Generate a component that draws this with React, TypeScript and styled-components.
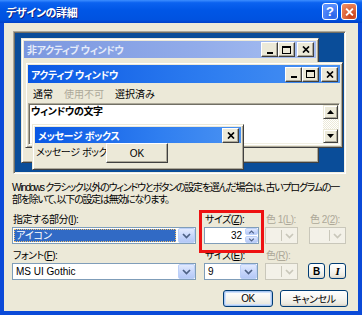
import React from "react";
import styled, { createGlobalStyle, css } from "styled-components";

const GlobalStyle = createGlobalStyle`
  html, body { margin: 0; padding: 0; background: #fff; }
  body {
    font-family: "Liberation Sans", "Noto Sans CJK JP", sans-serif;
    font-size: 10px;
    color: #000;
  }
`;

const Chevron = ({ color = "#4d6185", up = false }: { color?: string; up?: boolean }) => (
  <svg width="9" height="6" viewBox="0 0 9 6">
    <path
      d={up ? "M1 5 L4.5 1.5 L8 5" : "M1 1 L4.5 4.5 L8 1"}
      fill="none"
      stroke={color}
      strokeWidth="1.7"
    />
  </svg>
);

const Cross = ({ color = "#000", size = 8 }: { color?: string; size?: number }) => (
  <svg width={size} height={size - 1} viewBox="0 0 8 7">
    <path d="M1 0.5 L7 6.5 M7 0.5 L1 6.5" stroke={color} strokeWidth="1.7" />
  </svg>
);

const Triangle = ({ up = false }: { up?: boolean }) => (
  <svg width="7" height="4" viewBox="0 0 7 4">
    <path d={up ? "M0 4 L3.5 0 L7 4 Z" : "M0 0 L3.5 4 L7 0 Z"} fill="#000" />
  </svg>
);

export default function App() {
  return (
    <>
      <GlobalStyle />
      <Dialog>
        <TitleBar>
          <TitleText>デザインの詳細</TitleText>
          <CaptionButton $variant="help">?</CaptionButton>
          <CaptionButton $variant="close">
            <Cross color="#fff" size={9} />
          </CaptionButton>
        </TitleBar>

        <Body>
          <Preview>
            <Win $x={7} $y={6} $w={298} $h={125}>
              <Caption $h={17}>
                <CaptionTitle>非アクティブ ウィンドウ</CaptionTitle>
                <WinButton>
                  <MinGlyph />
                </WinButton>
                <WinButton>
                  <MaxGlyph />
                </WinButton>
                <WinButton $gap>
                  <Cross />
                </WinButton>
              </Caption>
            </Win>

            <Win $x={11} $y={30} $w={318} $h={86}>
              <Caption $active $h={18}>
                <CaptionTitle $active>アクティブ ウィンドウ</CaptionTitle>
                <WinButton>
                  <MinGlyph />
                </WinButton>
                <WinButton>
                  <MaxGlyph />
                </WinButton>
                <WinButton $gap>
                  <Cross />
                </WinButton>
              </Caption>
              <MenuBar>
                <MenuItem>通常</MenuItem>
                <MenuItem $disabled>使用不可</MenuItem>
                <MenuItem>選択済み</MenuItem>
              </MenuBar>
              <Client>
                <ClientText>ウィンドウの文字</ClientText>
                <ScrollBar>
                  <ScrollButton>
                    <Triangle up />
                  </ScrollButton>
                  <ScrollTrack />
                  <ScrollButton>
                    <Triangle />
                  </ScrollButton>
                </ScrollBar>
              </Client>
            </Win>

            <Win $x={18} $y={92} $w={212} $h={46}>
              <Caption $active $h={16}>
                <CaptionTitle $active>メッセージ ボックス</CaptionTitle>
                <WinButton>
                  <Cross />
                </WinButton>
              </Caption>
              <MsgBody>
                <MsgText>メッセージ ボックスの</MsgText>
                <MsgOk>OK</MsgOk>
              </MsgBody>
            </Win>
          </Preview>

          <Description>
            <DescLine>
              Windows クラシック以外のウィンドウとボタンの設定を選んだ場合は、古いプログラムの一
            </DescLine>
            <DescLine>部を除いて、以下の設定は無効になります。</DescLine>
          </Description>

          <Controls>
            <Label>
              指定する部分(<u>I</u>):
            </Label>
            <Label>
              サイズ(<u>Z</u>):
            </Label>
            <Label $disabled>
              色 1(<u>L</u>):
            </Label>
            <Label $disabled>
              色 2(<u>2</u>):
            </Label>

            <Combo $w={184}>
              <ComboText $selected>アイコン</ComboText>
              <ComboArrow>
                <Chevron />
              </ComboArrow>
            </Combo>
            <Combo $w={55}>
              <SpinText>32</SpinText>
              <SpinButtons>
                <SpinHalf>
                  <Chevron up />
                </SpinHalf>
                <SpinHalf>
                  <Chevron />
                </SpinHalf>
              </SpinButtons>
            </Combo>
            <Combo $w={33} $disabled>
              <ComboText />
              <ComboArrow $disabled>
                <Chevron color="#c9c7ba" />
              </ComboArrow>
            </Combo>
            <Combo $w={37} $disabled>
              <ComboText />
              <ComboArrow $disabled>
                <Chevron color="#c9c7ba" />
              </ComboArrow>
            </Combo>

            <Label>
              フォント(<u>F</u>):
            </Label>
            <Label>
              サイズ(<u>E</u>):
            </Label>
            <Label $disabled>
              色(<u>R</u>):
            </Label>
            <span />

            <Combo $w={184}>
              <ComboText>MS UI Gothic</ComboText>
              <ComboArrow>
                <Chevron />
              </ComboArrow>
            </Combo>
            <Combo $w={54}>
              <ComboText>9</ComboText>
              <ComboArrow>
                <Chevron />
              </ComboArrow>
            </Combo>
            <Combo $w={33} $disabled>
              <ComboText />
              <ComboArrow $disabled>
                <Chevron color="#c9c7ba" />
              </ComboArrow>
            </Combo>
            <StyleButtons>
              <XPButton $w={17} $h={16}>
                <b>B</b>
              </XPButton>
              <XPButton $w={17} $h={16}>
                <Italic>I</Italic>
              </XPButton>
            </StyleButtons>

            <Highlight />
          </Controls>

          <ButtonRow>
            <XPButton $w={50} $h={17} $default>
              OK
            </XPButton>
            <XPButton $w={68} $h={17}>
              キャンセル
            </XPButton>
          </ButtonRow>
        </Body>
      </Dialog>
    </>
  );
}

const Dialog = styled.div`
  width: 362px;
  height: 315px;
  box-sizing: border-box;
  display: flex;
  flex-direction: column;
  background: #0b4ad8;
  font-feature-settings: "palt";
  overflow: hidden;
`;

const TitleBar = styled.div`
  height: 23px;
  flex: none;
  display: flex;
  align-items: center;
  gap: 3px;
  padding: 0 5px 0 6px;
  background: linear-gradient(
    180deg,
    #3d8eff 0%,
    #0b62f0 12%,
    #0056e6 45%,
    #0052e0 85%,
    #0040c8 100%
  );
`;

const TitleText = styled.div`
  flex: 1;
  color: #fff;
  font-weight: bold;
  font-size: 11px;
  letter-spacing: -0.4px;
  text-shadow: 1px 1px #0c1f80;
`;

const CaptionButton = styled.div<{ $variant: "help" | "close" }>`
  width: 16px;
  height: 17px;
  flex: none;
  box-sizing: border-box;
  border: 1px solid #fff;
  border-radius: 3px;
  display: flex;
  align-items: center;
  justify-content: center;
  color: #fff;
  font: bold 13px "Liberation Sans", sans-serif;
  ${({ $variant }) =>
    $variant === "help"
      ? css`
          background: radial-gradient(circle at 70% 80%, #2a63e8, #5b92ff 80%);
        `
      : css`
          background: radial-gradient(circle at 70% 80%, #c83d16, #ef8a5e 85%);
        `}
`;

const Body = styled.div`
  flex: 1;
  margin: 0 4px 4px;
  padding: 8px 11px 0 8px;
  background: #ece9d8;
  display: flex;
  flex-direction: column;
  min-width: 0;
`;

const Preview = styled.div`
  position: relative;
  height: 143px;
  flex: none;
  margin: 0 1px;
  box-sizing: border-box;
  background: #0a4d99;
  border: 1px solid;
  border-color: #aca899 #fff #fff #aca899;
  box-shadow: inset 1px 1px 0 #716f64, inset -1px -1px 0 #f1efe2;
  overflow: hidden;
`;

const Win = styled.div<{ $x: number; $y: number; $w: number; $h: number }>`
  position: absolute;
  left: ${({ $x }) => $x}px;
  top: ${({ $y }) => $y}px;
  width: ${({ $w }) => $w}px;
  height: ${({ $h }) => $h}px;
  box-sizing: border-box;
  background: #ece9d8;
  border: 1px solid;
  border-color: #ece9d8 #404040 #404040 #ece9d8;
  box-shadow: inset 1px 1px 0 #fff, inset -1px -1px 0 #aca899;
  padding: 2px;
  display: flex;
  flex-direction: column;
`;

const Caption = styled.div<{ $active?: boolean; $h: number }>`
  height: ${({ $h }) => $h}px;
  flex: none;
  display: flex;
  align-items: center;
  padding: 0 2px 0 3px;
  background: ${({ $active }) =>
    $active
      ? "linear-gradient(90deg, #0a58e4 0%, #2f7ef0 60%, #4a92f2 100%)"
      : "linear-gradient(90deg, #7b97df 0%, #92acea 60%, #a8c0f2 100%)"};
`;

const CaptionTitle = styled.div<{ $active?: boolean }>`
  flex: 1;
  font-weight: bold;
  font-size: 10px;
  letter-spacing: -0.4px;
  color: ${({ $active }) => ($active ? "#fff" : "#e4ebfa")};
  white-space: nowrap;
`;

const WinButton = styled.div<{ $gap?: boolean }>`
  width: 17px;
  height: 15px;
  flex: none;
  box-sizing: border-box;
  margin-left: ${({ $gap }) => ($gap ? 2 : 0)}px;
  background: #ece9d8;
  border: 1px solid;
  border-color: #fff #404040 #404040 #fff;
  box-shadow: inset -1px -1px 0 #aca899;
  display: flex;
  align-items: center;
  justify-content: center;
`;

const MinGlyph = styled.div`
  width: 6px;
  height: 2px;
  background: #000;
  margin-top: 6px;
`;

const MaxGlyph = styled.div`
  width: 9px;
  height: 8px;
  box-sizing: border-box;
  border: 1px solid #000;
  border-top-width: 2px;
`;

const MenuBar = styled.div`
  height: 20px;
  flex: none;
  display: flex;
  align-items: center;
  gap: 11px;
  padding-left: 5px;
`;

const MenuItem = styled.span<{ $disabled?: boolean }>`
  color: ${({ $disabled }) => ($disabled ? "#aca899" : "#000")};
`;

const Client = styled.div`
  height: 42px;
  flex: none;
  box-sizing: border-box;
  background: #fff;
  border: 1px solid;
  border-color: #aca899 #fff #fff #aca899;
  box-shadow: inset 1px 1px 0 #716f64, inset -1px -1px 0 #f1efe2;
  padding: 1px;
  display: flex;
`;

const ClientText = styled.div`
  flex: 1;
  font-weight: bold;
  line-height: 12px;
  letter-spacing: -0.4px;
  padding: 1px 0 0 1px;
`;

const ScrollBar = styled.div`
  width: 15px;
  display: flex;
  flex-direction: column;
`;

const ScrollButton = styled.div`
  height: 14px;
  box-sizing: border-box;
  background: #ece9d8;
  border: 1px solid;
  border-color: #ece9d8 #404040 #404040 #ece9d8;
  box-shadow: inset 1px 1px 0 #fff, inset -1px -1px 0 #aca899;
  display: flex;
  align-items: center;
  justify-content: center;
`;

const ScrollTrack = styled.div`
  flex: 1;
  background: repeating-conic-gradient(#fff 0 25%, #ece9d8 0 50%) 0 0 / 2px 2px;
`;

const MsgBody = styled.div`
  position: relative;
  flex: 1;
  padding-left: 1px;
`;

const MsgText = styled.div`
  width: 70px;
  overflow: hidden;
  line-height: 12px;
  padding-top: 4px;
  letter-spacing: -0.4px;
  white-space: nowrap;
`;

const MsgOk = styled.div`
  position: absolute;
  left: 71px;
  top: 0;
  width: 62px;
  height: 20px;
  box-sizing: border-box;
  background: #ece9d8;
  border: 1px solid;
  border-color: #fff #404040 #404040 #fff;
  box-shadow: inset -1px -1px 0 #aca899;
  display: flex;
  align-items: center;
  justify-content: center;
`;

const Description = styled.div`
  margin-top: 8px;
  line-height: 12px;
`;

const DescLine = styled.div`
  white-space: nowrap;
  letter-spacing: -1.25px;
`;

const Controls = styled.div`
  position: relative;
  margin-top: 8px;
  display: grid;
  grid-template-columns: 192px 61px 44px 38px;
  grid-template-rows: 13px 17px 19px 17px;
`;

const Label = styled.div<{ $disabled?: boolean }>`
  align-self: end;
  line-height: 12px;
  margin-bottom: 1px;
  padding-left: 1px;
  letter-spacing: -0.5px;
  white-space: nowrap;
  color: ${({ $disabled }) => ($disabled ? "#aca899" : "#000")};
`;

const Combo = styled.div<{ $w: number; $disabled?: boolean }>`
  width: ${({ $w }) => $w}px;
  height: 17px;
  box-sizing: border-box;
  border: 1px solid ${({ $disabled }) => ($disabled ? "#c9c7ba" : "#7f9db9")};
  background: ${({ $disabled }) => ($disabled ? "#f3f1e8" : "#fff")};
  display: flex;
  padding: 0 0 0 1px;
`;

const ComboText = styled.div<{ $selected?: boolean }>`
  flex: 1;
  min-width: 0;
  margin: 1px 2px 1px 0;
  padding-left: 2px;
  line-height: 13px;
  white-space: nowrap;
  ${({ $selected }) =>
    $selected &&
    css`
      background: #316ac5;
      color: #fff;
      outline: 1px dotted #f4c26b;
      outline-offset: -1px;
    `}
`;

const ComboArrow = styled.div<{ $disabled?: boolean }>`
  width: 15px;
  flex: none;
  display: flex;
  align-items: center;
  justify-content: center;
  ${({ $disabled }) =>
    $disabled
      ? css`
          border-left: 1px solid #c9c7ba;
          margin: 2px 0;
        `
      : css`
          border-radius: 2px;
          border: 1px solid #bcd0f8;
          background: linear-gradient(180deg, #e2eafe 0%, #c5d5fb 55%, #b4c8f6 100%);
        `}
`;

const SpinText = styled.div`
  flex: 1;
  text-align: right;
  padding-right: 3px;
  line-height: 15px;
`;

const SpinButtons = styled.div`
  width: 13px;
  display: flex;
  flex-direction: column;
  gap: 1px;
`;

const SpinHalf = styled.div`
  flex: 1;
  border-radius: 2px;
  border: 1px solid #bcd0f8;
  background: linear-gradient(180deg, #e2eafe 0%, #c5d5fb 55%, #b4c8f6 100%);
  display: flex;
  align-items: center;
  justify-content: center;
  svg {
    width: 7px;
    height: 4px;
  }
`;

const StyleButtons = styled.div`
  display: flex;
  gap: 4px;
  margin-left: -1px;
`;

const XPButton = styled.div<{ $w: number; $h: number; $default?: boolean }>`
  width: ${({ $w }) => $w}px;
  height: ${({ $h }) => $h}px;
  box-sizing: border-box;
  border: 1px solid #003c74;
  border-radius: 3px;
  background: linear-gradient(180deg, #fff 0%, #f6f5f0 50%, #ebe9df 85%, #d6d0c5 100%);
  display: flex;
  align-items: center;
  justify-content: center;
  letter-spacing: -0.4px;
  ${({ $default }) =>
    $default &&
    css`
      box-shadow: inset 0 0 0 1px #a8c6f2, inset 0 0 0 2px #cfe0fa;
    `}
`;

const Italic = styled.i`
  font: italic bold 11px "Liberation Serif", serif;
`;

/* red annotation frame drawn over the size field */
const Highlight = styled.div`
  position: absolute;
  left: 187px;
  top: -4px;
  width: 65px;
  height: 43px;
  box-sizing: border-box;
  border: 3px solid #ee1111;
  pointer-events: none;
`;

const ButtonRow = styled.div`
  margin-top: 10px;
  display: flex;
  justify-content: flex-end;
  gap: 7px;
  margin-right: -1px;
`;
